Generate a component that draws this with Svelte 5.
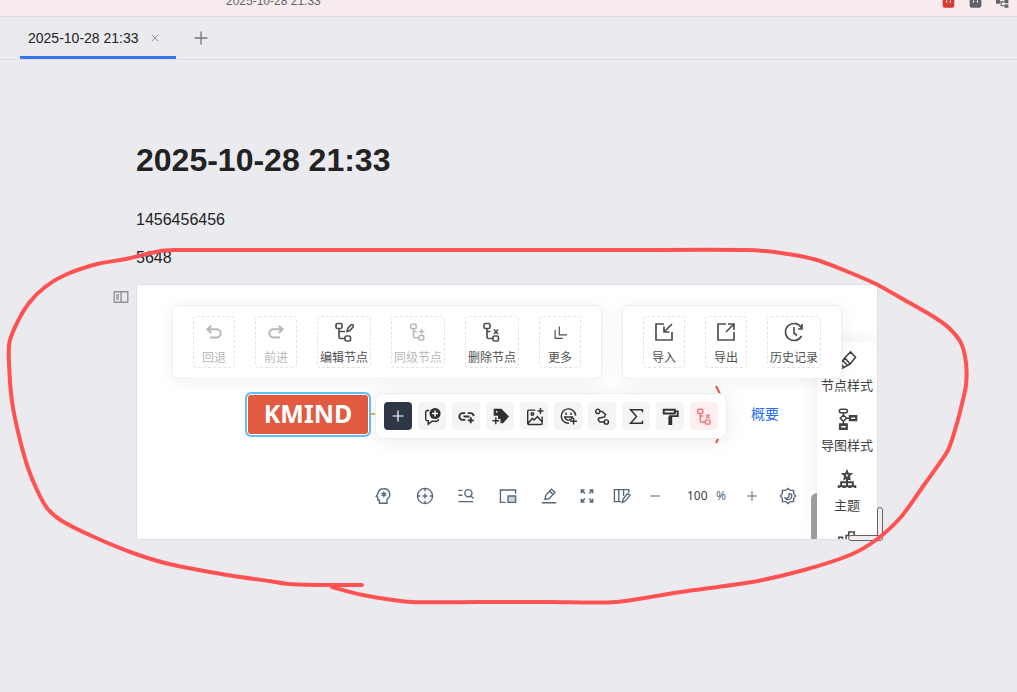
<script>
	const tree = 'M3.5 1.5h3a1.5 1.5 0 0 1 1.5 1.5v2a1.5 1.5 0 0 1-1.5 1.5h-3A1.5 1.5 0 0 1 2 5V3a1.5 1.5 0 0 1 1.5-1.5zM5 6.5V15a1.5 1.5 0 0 0 1.5 1.5H11M12.5 14H15a1.5 1.5 0 0 1 1.5 1.5v2A1.5 1.5 0 0 1 15 19h-2.5a1.5 1.5 0 0 1-1.5-1.5v-2a1.5 1.5 0 0 1 1.5-1.5z';

	// line = stroked path, fill = solid path, knock = light strokes over the solid part
	const icons = {
		undo: { line: 'M7 3 2.5 7 7 11M2.5 7H13a4.500 4.500 0 0 1 0 9H5.500', bold: true },
		redo: { line: 'M13 3l4.500 4-4.500 4M17.500 7H7a4.500 4.500 0 0 0 0 9h7.500', bold: true },
		edit: { line: tree + 'M5 9.5h6M13 9.500l1-3.500 3.500-3.500q2.500 0 1.500 2.500L16 8.500z' },
		sibling: { line: tree + 'M5 9.5h3.5M14 6.500v6M11 9.500h6' },
		remove: { line: tree + 'M5 9.5h3.5M12 7.500l4 4.500M16 7.500l-4 4.500' },
		more: { line: 'M3 7v12h11M9 2v12h11' },
		import: { line: 'M10 2H2v16h16v-8M18 2l-8 8M10 4.5V10h5.5' },
		export: { line: 'M10 2H2v16h16v-8M10 10l8-8M12 2h6v6' },
		history: { line: 'M17.5 6a8.500 8.500 0 1 0 0 8M18 2v5h-4M10 5v6l3 2.500' },
		plus: { line: 'M10 2v16M2 10h16' },
		minus: { line: 'M2 10h16' },
		comment: {
			line: 'M6 3H4a2 2 0 0 0-2 2v8a2 2 0 0 0 2 2h1v4l4.500-3.500H15a2 2 0 0 0 2-2V13',
			fill: 'M13 0a6.500 6.500 0 1 1 0 13 6.500 6.500 0 0 1 0-13z',
			knock: 'M13 3v7M9.500 6.500h7'
		},
		link: { line: 'M8.500 14H5.500a4 4 0 0 1 0-8h3M11.500 6h3A4 4 0 0 1 18.500 9.500M6.500 10h7M15 11v7M11.500 14.500h7', bold: true },
		tag: {
			fill: 'M2 1h9l9 9-7 8h-3v-5H7V9H2z',
			knock: 'M4.500 4.500h2',
			line: 'M4.500 11v8M.5 15h8'
		},
		image: { line: 'M11 2.500H3.500A1.500 1.500 0 0 0 2 4v14a1.500 1.500 0 0 0 1.500 1.500h14A1.500 1.500 0 0 0 19 18v-8M17 0v7M13.500 3.500h7M2.500 18l5-6 2 2 4-4 5 6M9 7a1.500 1.500 0 1 1-3 0 1.500 1.500 0 0 1 3 0z' },
		smile: {
			line: 'M18.500 9A8.500 8.500 0 1 0 10.500 18M16 11.500v8M12 15.500h8M5.500 10.500c1 5 8 5 9 0z',
			fill: 'M6 5.500h2v2.500H6zM12 5.500h2v2.500h-2z'
		},
		relation: { line: 'M7 4a2.500 2.500 0 1 1-5 0 2.500 2.500 0 0 1 5 0zM17 16.500a2.500 2.500 0 1 1-5 0 2.500 2.500 0 0 1 5 0zM7 4h2.500l4 3.500-1 3L5.500 12l-.5 2 2 2.500h5' },
		sigma: { line: 'M17 5V2H3l7 8-7 8h14v-3' },
		roller: { line: 'M2 2h13v4.500H2zM15 4h3.500v5.500H9.500V12', fill: 'M7.500 10h4.500v10H7.500z', bold: true },
		head: { line: 'M5.500 19v-4H3.500v-3.500L1.500 10.500l2-3C4 3 7 1 11 1a7 7 0 0 1 4 13v5zM11 4.500v7M8 6.500l6 3M14 6.500l-6 3' },
		target: { line: 'M19.500 10a9.500 9.500 0 1 1-19 0 9.500 9.500 0 0 1 19 0zM10 .5V4M10 16v3.500M.5 10H4M16 10h3.500M10 7v6M7 10h6' },
		find: { line: 'M.5 3h5M.5 9h5M.5 17h18.500M17.500 6.500a4.500 4.500 0 1 1-9 0 4.500 4.500 0 0 1 9 0zM16 10l3.500 3' },
		minimap: { line: 'M7 18H.5V2.500h19V7M10 10h9.500v8H10z', pale: 'M10 10h9.500v8H10z' },
		pen: { line: 'M1 18.500h18M5 14l1-5 7-7.500 4.500 4-7.500 8zM11 4l4 4' },
		expand: { line: 'M2 6V1.500h4.500M2 1.500l5 5M13.500 1.500H18V6M18 1.500l-5 5M2 14v4.500h4.500M2 18.500l5-5M13.500 18.500H18V14M18 18.500l-5-5', bold: true },
		board: { line: 'M9 17H.5V2h18v4M6 2v15M12 2v8M10.500 18l1-4.500L17 7l3 2-5.500 7z' },
		gear: {
			line: 'M10 .5l3 2.500h4v4l2.500 3-2.500 3v4h-4l-3 2.500L7 17H3v-4L.5 10 3 7V3h4zM14 7.500a4.500 4.500 0 1 1-7.500 5c4 1 5-1 5-5.500l2.500.5z'
		},
		brush: { line: 'M7.500 7.500 14 1l5.500 6-6 7.500zM7.500 7.500l6 7M7.500 7.500 3 14l-2 4 4 1 8.500-4.500M5.500 10.500l5 5.500M3 14l3.500 4' },
		flow: {
			line: 'M3.500-2h5a2 2 0 0 1 0 4h-5a2 2 0 0 1 0-4zM6 2v2.500M6 4.500l3.500 3.500L6 11.500 2.500 8zM9.500 8H13M6 11.500V15',
			fill: 'M12 4.500h9.500v7H12zM1 13.500h10V21H1z',
			knock: 'M14.500 8h4.500M3.500 17.500h5'
		},
		theme: {
			line: 'M10 .5l1.200 2.600 3 .3-2.200 2 .7 3L10 7l-2.700 1.400.7-3-2.200-2 3-.3zM10 8v9M3.500 17v-4.500h13V17M.8 19v-2h5.400v2M7.500 19v-2h5v2M13.800 19v-2h5.400v2',
			bold: true
		},
		puzzle: { line: 'M1 9V7h4v5M9 10V5h3V1h6v5' },
		panel: { line: 'M1.500 3.500h17v13h-17zM10 3.500v13M4 7.500h3.500M4 10h3.500M4 12.500h3.500' },
		close: { line: 'M2 2l16 16M18 2L2 18', bold: true },
		bag: { fill: 'M1 3h18v12q0 3-3 3H4q-3 0-3-3z', knock: 'M7 7v3M13 7v3' },
		nodes: { line: 'M1 9h7M8 9v6h5M8 9h5', fill: 'M0 6h6v6H0zM13 6h6v5h-6zM13 13h6v5h-6z' }
	};

	const editTools = [
		{ icon: 'undo', label: '回退', disabled: true },
		{ icon: 'redo', label: '前进', disabled: true },
		{ icon: 'edit', label: '编辑节点' },
		{ icon: 'sibling', label: '同级节点', disabled: true },
		{ icon: 'remove', label: '删除节点' },
		{ icon: 'more', label: '更多', size: 14 }
	];
	const fileTools = [
		{ icon: 'import', label: '导入' },
		{ icon: 'export', label: '导出' },
		{ icon: 'history', label: '历史记录' }
	];
	const nodeTools = ['plus', 'comment', 'link', 'tag', 'image', 'smile', 'relation', 'sigma', 'roller', 'remove'];
	const viewTools = ['head', 'target', 'find', 'minimap', 'pen'];
	const sideTools = [
		{ icon: 'brush', label: '节点样式' },
		{ icon: 'flow', label: '导图样式' },
		{ icon: 'theme', label: '主题' },
		{ icon: 'puzzle', label: '' }
	];

	const stroke = [
		[362, 585], [325, 585], [289, 584], [269, 581], [227, 575], [169, 564], [133, 553], [94, 537],
		[62, 521], [47, 508], [37, 490], [28, 468], [20, 440], [13, 408], [10, 382], [9, 345],
		[16, 325], [29, 303], [45, 287], [65, 275], [97, 264], [126, 259], [156, 252], [176, 250],
		[300, 250], [600, 250], [746, 250], [788, 254], [817, 260], [846, 271], [876, 284], [908, 302],
		[934, 317], [949, 328], [961, 343], [966, 363], [966, 385], [961, 408], [955, 430], [947, 452],
		[924, 485], [901, 517], [876, 540], [850, 555], [804, 570], [752, 582], [681, 592], [616, 602],
		[550, 602], [480, 602], [412, 602], [363, 595], [332, 587]
	];

	function smooth(points) {
		let d = `M${points[0]}`;
		for (let i = 0; i < points.length - 1; i++) {
			const p0 = points[i - 1] ?? points[i];
			const p1 = points[i];
			const p2 = points[i + 1];
			const p3 = points[i + 2] ?? p2;
			const c1 = [p1[0] + (p2[0] - p0[0]) / 8, p1[1] + (p2[1] - p0[1]) / 8];
			const c2 = [p2[0] - (p3[0] - p1[0]) / 8, p2[1] - (p3[1] - p1[1]) / 8];
			d += `C${c1} ${c2} ${p2}`;
		}
		return d;
	}

	let zoom = $state('100');
</script>

{#snippet icon(name, size = 20)}
	<svg
		class="icon"
		class:bold={icons[name].bold}
		width={size}
		height={size}
		viewBox="0 0 20 20"
		aria-hidden="true"
	>
		{#if icons[name].pale}<path class="pale" d={icons[name].pale} />{/if}
		{#if icons[name].fill}<path class="solid" d={icons[name].fill} />{/if}
		{#if icons[name].knock}<path class="knock" d={icons[name].knock} />{/if}
		{#if icons[name].line}<path d={icons[name].line} />{/if}
	</svg>
{/snippet}

{#snippet toolbar(tools)}
	<div class="toolbar">
		{#each tools as tool}
			<button class="tool" disabled={tool.disabled}>
				<span class="tool-icon">{@render icon(tool.icon, tool.size ?? 20)}</span>
				{tool.label}
			</button>
		{/each}
	</div>
{/snippet}

<div class="app">
	<header class="titlebar">
		<span class="title">2025-10-28 21:33</span>
		<button class="top-btn red" aria-label="PDF">{@render icon('bag', 13)}</button>
		<button class="top-btn" aria-label="Bag">{@render icon('bag', 13)}</button>
		<button class="top-btn" aria-label="Map">{@render icon('nodes', 13)}</button>
	</header>

	<nav class="tabs">
		<div class="tab">
			<a href="#doc">2025-10-28 21:33</a>
			<button aria-label="Close">{@render icon('close', 8)}</button>
		</div>
		<button class="new-tab" aria-label="New tab">{@render icon('plus', 16)}</button>
	</nav>

	<main id="doc">
		<h1>2025-10-28 21:33</h1>
		<p>1456456456</p>
		<p>5648</p>

		<section class="widget">
			<button class="gutter" aria-label="Block">{@render icon('panel', 16)}</button>
			<div class="mindmap">
				<div class="toolbars">
					{@render toolbar(editTools)}
					{@render toolbar(fileTools)}
				</div>

				<svg class="lines" aria-hidden="true">
					<path class="branch" d="M230 129h20" />
					<path class="brace" d="M579 101q16 28 0 57" />
				</svg>
				<div class="node">KMIND</div>
				<a class="summary" href="#summary">概要</a>
				<div class="node-tools">
					{#each nodeTools as name, i}
						<button class:primary={i === 0} class:danger={name === 'remove'} aria-label={name}>
							{@render icon(name, i === 0 ? 14 : 17)}
						</button>
					{/each}
				</div>

				<div class="view-bar">
					<div class="view-tools">
						{#each viewTools as name}
							<button aria-label={name}>{@render icon(name, 16)}</button>
						{/each}
					</div>
					<div class="view-tools zoom-tools">
						<button aria-label="expand">{@render icon('expand', 14)}</button>
						<button aria-label="board">{@render icon('board', 16)}</button>
						<button aria-label="Zoom out">{@render icon('minus', 12)}</button>
					</div>
					<label class="zoom"><input aria-label="Zoom" bind:value={zoom} />%</label>
					<div class="view-tools end-tools">
						<button aria-label="Zoom in">{@render icon('plus', 12)}</button>
						<button aria-label="Settings">{@render icon('gear', 16)}</button>
					</div>
				</div>

				<aside class="sidebar">
					{#each sideTools as tool}
						<button aria-label={tool.label || 'More'}>
							{@render icon(tool.icon, 18)}
							<span>{tool.label}</span>
						</button>
					{/each}
				</aside>
				<div class="side-handle"></div>
			</div>
			<span class="grip vertical"></span>
			<span class="grip horizontal"></span>
		</section>
	</main>

	<svg class="ink" aria-hidden="true">
		<path d={smooth(stroke)} />
	</svg>
</div>

<style>
	:global(body) {
		margin: 0;
		background: #ebebef;
	}
	.app {
		position: relative;
		min-height: 100vh;
		overflow: hidden;
		font-family: 'Liberation Sans', 'Noto Sans CJK SC', sans-serif;
		color: #222;
	}
	button {
		display: flex;
		align-items: center;
		justify-content: center;
		padding: 0;
		border: 0;
		background: none;
		color: inherit;
		font: inherit;
	}
	a {
		color: inherit;
		text-decoration: none;
	}
	.icon {
		display: block;
		flex: none;
		overflow: visible;
		fill: none;
		stroke: currentColor;
		stroke-width: 1.7;
	}
	.icon.bold {
		stroke-width: 2.2;
	}
	.icon .solid {
		fill: currentColor;
		stroke: none;
	}
	.icon .knock {
		stroke: #fff;
	}
	.icon .pale {
		fill: #ccd3da;
		stroke: none;
	}

	.titlebar {
		display: flex;
		align-items: flex-end;
		gap: 14px;
		box-sizing: border-box;
		height: 17px;
		padding: 0 8px 7px 226px;
		overflow: hidden;
		border-bottom: 1px solid #dcdce0;
		background: #f8ebed;
		color: #5f6368;
		font-size: 12px;
		line-height: 16px;
	}
	.title {
		margin-right: auto;
	}
	.top-btn.red {
		color: #d23f31;
	}

	.tabs {
		display: flex;
		height: 42px;
		padding-left: 20px;
		border-bottom: 1px solid #dfe0e3;
	}
	.tab {
		display: flex;
		align-items: center;
		gap: 12px;
		box-sizing: border-box;
		width: 156px;
		padding: 2px 0 0 8px;
		border-bottom: 3px solid #3575f0;
		border-radius: 1px;
		font-size: 14px;
	}
	.tab button {
		color: #86888c;
	}
	.new-tab {
		margin-left: 17px;
		color: #76787c;
	}

	main {
		padding: 80px 139px 0 136px;
	}
	h1 {
		margin: 0 0 28px;
		font-size: 32px;
		line-height: 40px;
	}
	p {
		margin: 0 0 14px;
		font-size: 16px;
		line-height: 24px;
	}

	.widget {
		position: relative;
	}
	.gutter {
		position: absolute;
		top: 5px;
		left: -23px;
		color: #909298;
	}
	.mindmap {
		position: relative;
		display: flex;
		flex-direction: column;
		box-sizing: border-box;
		height: 256px;
		overflow: hidden;
		border: 1px solid #dedfe2;
		background: #fff;
		font-family: 'Noto Sans CJK SC', sans-serif;
	}
	.toolbars {
		position: relative;
		z-index: 2;
		display: flex;
		gap: 20px;
		padding: 20px 35px;
	}
	.toolbar {
		display: flex;
		gap: 20px;
		padding: 10px 20px;
		border: 1px solid #eee;
		border-radius: 6px;
		background: #fff;
		box-shadow: 0 2px 20px rgba(0, 0, 0, 0.06);
	}
	.tool {
		flex-direction: column;
		box-sizing: border-box;
		min-width: 42px;
		height: 52px;
		padding: 0 2px;
		border: 1px dashed #e4e4e6;
		border-radius: 4px;
		color: #505050;
		font-size: 12px;
		line-height: 20px;
		white-space: nowrap;
	}
	.tool:disabled {
		color: #b8b8b8;
	}
	.tool-icon {
		display: flex;
		align-items: center;
		height: 30px;
	}
	.tool:disabled .icon {
		width: 18px;
	}

	.lines {
		position: absolute;
		inset: 0;
		width: 100%;
		height: 100%;
		fill: none;
		stroke-width: 2;
	}
	.branch {
		stroke: #eab54d;
	}
	.brace {
		stroke: #e25a40;
	}
	.node {
		position: absolute;
		top: 107px;
		left: 108px;
		box-sizing: border-box;
		width: 126px;
		height: 45px;
		border: 2px solid #60c3f2;
		border-radius: 6px;
		background: #e25a40;
		box-shadow: inset 0 0 0 1px #fff;
		color: #fff;
		font: bold 25px/39px 'Noto Sans', sans-serif;
		text-align: center;
	}
	.summary {
		position: absolute;
		top: 118px;
		left: 614px;
		color: #2d6ff2;
		font-size: 14px;
		line-height: 20px;
	}
	.node-tools {
		position: absolute;
		top: 108px;
		left: 238px;
		display: flex;
		gap: 6px;
		padding: 8px;
		border: 1px solid #eee;
		border-radius: 8px;
		background: #fff;
		box-shadow: 0 2px 20px rgba(0, 0, 0, 0.08);
	}
	.node-tools button {
		width: 28px;
		height: 28px;
		border-radius: 4px;
		background: #f5f5f5;
		color: #303030;
	}
	.node-tools .primary {
		background: #2d3748;
		color: #fff;
	}
	.node-tools .danger {
		background: #ffeeef;
		color: #f5737a;
	}

	.view-bar {
		display: flex;
		align-items: center;
		height: 24px;
		margin: auto 80px 31px 238px;
		color: #56677a;
	}
	.view-tools {
		display: flex;
		justify-content: space-between;
		width: 182px;
	}
	.zoom-tools {
		width: 81px;
		margin-left: 23px;
	}
	.zoom {
		display: flex;
		align-items: center;
		margin-left: 26px;
		font: 12px/20px 'Noto Sans', sans-serif;
	}
	.zoom input {
		width: 24px;
		margin-right: 5px;
		padding: 0;
		border: 0;
		background: none;
		color: #404040;
		font: inherit;
	}
	.end-tools {
		width: 50px;
		margin-left: 20px;
	}

	.sidebar {
		position: absolute;
		top: 57px;
		right: 0;
		bottom: 0;
		display: flex;
		flex-direction: column;
		gap: 14px;
		width: 60px;
		padding-top: 8px;
		box-sizing: border-box;
		overflow: hidden;
		border-radius: 6px 6px 0 0;
		background: #fff;
		box-shadow: 0 0 20px rgba(0, 0, 0, 0.08);
		color: #444;
		font-size: 13px;
	}
	.sidebar button {
		flex: none;
		flex-direction: column;
		gap: 6px;
		height: 46px;
	}
	.sidebar span {
		height: 20px;
		line-height: 20px;
		white-space: nowrap;
	}
	.side-handle {
		position: absolute;
		right: 60px;
		bottom: 0;
		width: 6px;
		height: 46px;
		border-radius: 6px 0 0 0;
		background: #9c9c9c;
	}

	.grip {
		position: absolute;
		box-sizing: border-box;
		border: 1px solid #5f6368;
		border-radius: 3px;
		background: #f8ebed;
	}
	.grip.vertical {
		right: -5px;
		bottom: 0;
		width: 6px;
		height: 33px;
	}
	.grip.horizontal {
		right: -5px;
		bottom: -1px;
		width: 35px;
		height: 6px;
	}

	.ink {
		position: absolute;
		inset: 0;
		width: 100%;
		height: 100%;
		fill: none;
		stroke: #ff5252;
		stroke-width: 4;
		stroke-linecap: round;
		stroke-linejoin: round;
		pointer-events: none;
	}
</style>
